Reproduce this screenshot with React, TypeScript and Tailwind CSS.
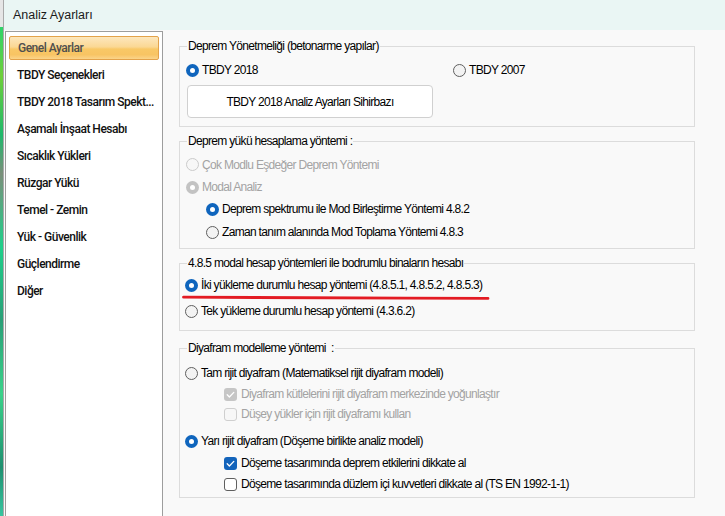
import React from "react";

const NARROW = "font-['Liberation_Sans',Arial,sans-serif] text-[12px] leading-[16px] tracking-[-0.68px]";

function Radio({ checked, disabled }: { checked?: boolean; disabled?: boolean }) {
  if (checked && !disabled)
    return (
      <span className="w-[13px] h-[13px] rounded-full bg-[#0f65bd] flex items-center justify-center shrink-0">
        <span className="w-[5px] h-[5px] rounded-full bg-white" />
      </span>
    );
  if (checked && disabled)
    return (
      <span className="w-[13px] h-[13px] rounded-full bg-[#c3c3c3] flex items-center justify-center shrink-0">
        <span className="w-[5px] h-[5px] rounded-full bg-white" />
      </span>
    );
  if (disabled)
    return <span className="w-[13px] h-[13px] rounded-full border border-[#cbcbcb] bg-[#f7f7f7] shrink-0" />;
  return <span className="w-[13px] h-[13px] rounded-full border border-[#5f5f5f] bg-[#f3f3f3] shrink-0" />;
}

function Check() {
  return (
    <svg width="13" height="13" viewBox="0 0 13 13">
      <polyline points="3.2,6.8 5.4,9 9.8,4.4" fill="none" stroke="white" strokeWidth="1.3" strokeLinecap="round" strokeLinejoin="round" />
    </svg>
  );
}

function Checkbox({ checked, disabled }: { checked?: boolean; disabled?: boolean }) {
  if (checked && !disabled)
    return (
      <span className="w-[13px] h-[13px] rounded-[3px] bg-[#1364bb] flex items-center justify-center shrink-0">
        <Check />
      </span>
    );
  if (checked && disabled)
    return (
      <span className="w-[13px] h-[13px] rounded-[3px] bg-[#c6c6c6] flex items-center justify-center shrink-0">
        <Check />
      </span>
    );
  if (disabled)
    return <span className="w-[13px] h-[13px] rounded-[3px] border border-[#cfcfcf] bg-[#f7f7f7] shrink-0" />;
  return <span className="w-[13px] h-[13px] rounded-[3px] border border-[#5f5f5f] bg-white shrink-0" />;
}

const leftItems = [
  "TBDY Seçenekleri",
  "TBDY 2018 Tasarım Spekt...",
  "Aşamalı İnşaat Hesabı",
  "Sıcaklık Yükleri",
  "Rüzgar Yükü",
  "Temel - Zemin",
  "Yük - Güvenlik",
  "Güçlendirme",
  "Diğer",
];

export default function App() {
  return (
    <div className="w-[725px] h-[516px] overflow-hidden flex bg-white">
      {/* background app sliver */}
      <div className="w-[3px] h-full flex flex-col shrink-0">
        <div className="h-[27px] bg-[#e6e6e6]" />
        <div className="flex-1 bg-[linear-gradient(180deg,#2fd36a_0%,#6fcf3a_10%,#1fb86b_22%,#7a8f7a_30%,#1fcf8a_45%,#2a9f77_60%,#3bd28a_75%,#1e8f6f_90%,#39c5a0_100%)]" />
      </div>
      {/* window */}
      <div className="flex-1 flex flex-col border-l border-[#a9a9a9] bg-[#f9f9f9]">
        <div className="h-[30px] shrink-0 bg-[#eaf6f4] flex items-center pl-[9px] font-['Liberation_Sans',Arial,sans-serif] text-[12.5px] text-[#1b1b1b]">
          Analiz Ayarları
        </div>
        <div className="flex-1 flex">
          {/* left panel */}
          <div className="ml-[1px] mt-[1px] w-[158px] shrink-0 border border-[#9d9d9d] border-b-0 bg-white pt-[2px] pl-[3px] pr-[3px] font-['Roboto',Arial,sans-serif] text-[12px] font-medium tracking-[-0.5px]">
            <div className="h-[27px] flex items-center">
              <div className="w-full h-[24px] flex items-center pl-[8px] rounded-[2px] border border-[#e3a24a] bg-[linear-gradient(180deg,#fde7bd_0%,#fbd894_45%,#f9c866_55%,#f8c463_80%,#fbd48a_100%)] text-[#4f4f4f]">
                Genel Ayarlar
              </div>
            </div>
            {leftItems.map((t) => (
              <div key={t} className="h-[27px] flex items-center pl-[8px] text-[#111]">
                {t}
              </div>
            ))}
          </div>

          {/* right area */}
          <div className={`flex-1 pt-[8px] pl-[16px] pr-[30px] text-black ${NARROW}`}>
            {/* group 1 */}
            <fieldset className="border border-[#dcdcdc] m-0 p-0 pb-[8px] min-w-0">
              <legend className="ml-[7px] px-[1px] leading-[16px]">Deprem Yönetmeliği (betonarme yapılar)</legend>
              <div className="pl-[6px]">
                <div className="mt-[6px] h-[20px] flex items-center">
                  <div className="w-[267px] flex items-center gap-[3px]">
                    <Radio checked />
                    <span>TBDY 2018</span>
                  </div>
                  <div className="flex items-center gap-[3px]">
                    <Radio />
                    <span>TBDY 2007</span>
                  </div>
                </div>
                <div className="mt-[5px] w-[246px] h-[33px] ml-[1px] rounded-[4px] border border-[#d0d0d0] bg-white flex items-center justify-center">
                  TBDY 2018 Analiz Ayarları Sihirbazı
                </div>
              </div>
            </fieldset>

            {/* group 2 */}
            <fieldset className="mt-[6px] border border-[#dcdcdc] m-0 p-0 pb-[4px] min-w-0">
              <legend className="ml-[7px] px-[1px] leading-[16px]">Deprem yükü hesaplama yöntemi :</legend>
              <div className="mt-[4px]">
                <div className="h-[23px] flex items-center gap-[3px] pl-[6px] text-[#a3a3a3]">
                  <Radio disabled />
                  <span>Çok Modlu Eşdeğer Deprem Yöntemi</span>
                </div>
                <div className="h-[22px] flex items-center gap-[3px] pl-[6px] text-[#a3a3a3]">
                  <Radio checked disabled />
                  <span>Modal Analiz</span>
                </div>
                <div className="h-[22px] flex items-center gap-[3px] pl-[26px]">
                  <Radio checked />
                  <span>Deprem spektrumu ile Mod Birleştirme Yöntemi 4.8.2</span>
                </div>
                <div className="h-[24px] flex items-center gap-[3px] pl-[26px]">
                  <Radio />
                  <span>Zaman tanım alanında Mod Toplama Yöntemi 4.8.3</span>
                </div>
              </div>
            </fieldset>

            {/* group 3 */}
            <fieldset className="mt-[6px] border border-[#dcdcdc] m-0 p-0 pb-[9px] min-w-0">
              <legend className="ml-[7px] px-[1px] leading-[16px]">4.8.5 modal hesap yöntemleri ile bodrumlu binaların hesabı</legend>
              <div className="pl-[5px]">
                <div className="relative mt-[4px] h-[20px] flex items-center gap-[3px]">
                  <Radio checked />
                  <span>İki yükleme durumlu hesap yöntemi (4.8.5.1, 4.8.5.2, 4.8.5.3)</span>
                  <svg className="absolute left-[-3px] top-[20px]" width="312" height="6" viewBox="0 0 312 6">
                    <path d="M1.5 2.2 C 80 2.6, 200 3.2, 306 3.4" fill="none" stroke="#e31b23" strokeWidth="2.8" strokeLinecap="round" />
                  </svg>
                </div>
                <div className="mt-[6px] h-[20px] flex items-center gap-[3px]">
                  <Radio />
                  <span>Tek yükleme durumlu hesap yöntemi (4.3.6.2)</span>
                </div>
              </div>
            </fieldset>

            {/* group 4 */}
            <fieldset className="mt-[9px] border border-[#dcdcdc] m-0 p-0 pb-[3px] min-w-0">
              <legend className="ml-[7px] px-[1px] leading-[16px] whitespace-pre">Diyafram modelleme yöntemi  :</legend>
              <div className="pl-[5px]">
                <div className="mt-[7px] h-[20px] flex items-center gap-[3px]">
                  <Radio />
                  <span>Tam rijit diyafram (Matematiksel rijit diyafram modeli)</span>
                </div>
                <div className="mt-[1px] h-[20px] flex items-center gap-[4px] pl-[39px] text-[#a3a3a3]">
                  <Checkbox checked disabled />
                  <span>Diyafram kütlelerini rijit diyafram merkezinde yoğunlaştır</span>
                </div>
                <div className="h-[20px] flex items-center gap-[4px] pl-[39px] text-[#a3a3a3]">
                  <Checkbox disabled />
                  <span>Düşey yükler için rijit diyaframı kullan</span>
                </div>
                <div className="mt-[7px] h-[20px] flex items-center gap-[3px]">
                  <Radio checked />
                  <span>Yarı rijit diyafram (Döşeme birlikte analiz modeli)</span>
                </div>
                <div className="mt-[2px] h-[20px] flex items-center gap-[4px] pl-[39px]">
                  <Checkbox checked />
                  <span>Döşeme tasarımında deprem etkilerini dikkate al</span>
                </div>
                <div className="mt-[1px] h-[20px] flex items-center gap-[4px] pl-[39px]">
                  <Checkbox />
                  <span>Döşeme tasarımında düzlem içi kuvvetleri dikkate al (TS EN 1992-1-1)</span>
                </div>
              </div>
            </fieldset>
          </div>
        </div>
      </div>
    </div>
  );
}
